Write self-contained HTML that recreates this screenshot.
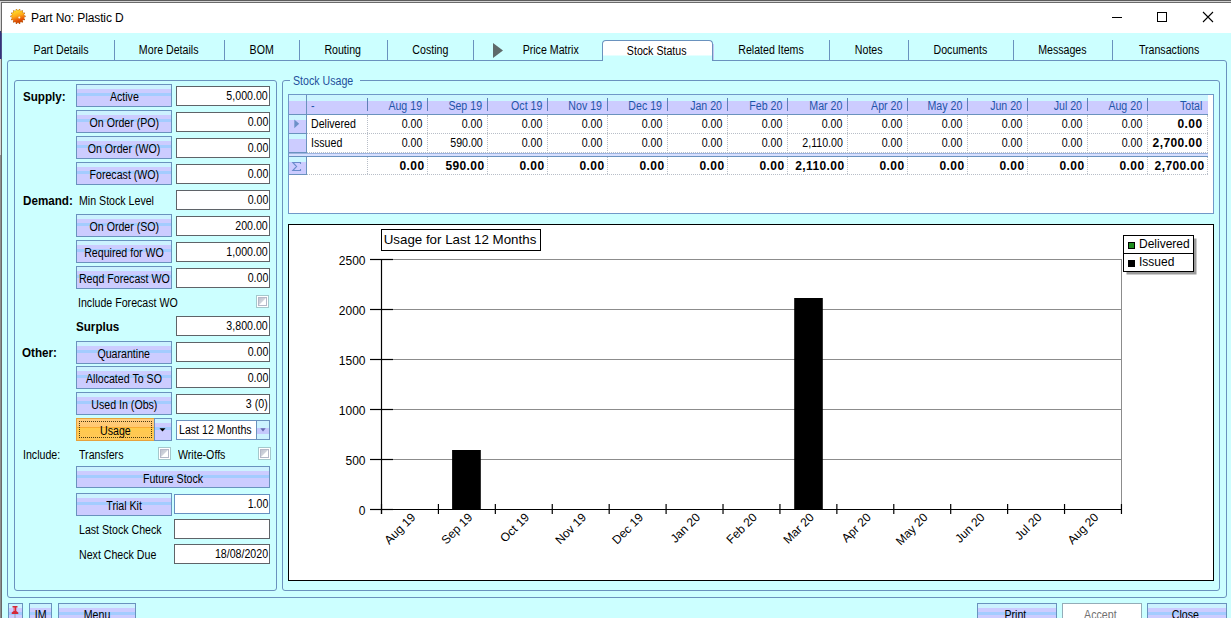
<!DOCTYPE html><html><head><meta charset="utf-8"><style>
*{box-sizing:border-box;margin:0;padding:0}
html,body{width:1231px;height:618px;overflow:hidden;background:#CCFFFF;}
body{position:relative;font-family:"Liberation Sans",sans-serif;font-size:11px;color:#000;}
.a{position:absolute;}
.x{display:inline-block;transform:scaleX(.885);font-size:12px;white-space:nowrap}
.xl{transform-origin:0 50%}
.xc{transform-origin:50% 50%;margin:0 -8px}
.xr{transform-origin:100% 50%}
.t{position:absolute;white-space:nowrap;line-height:14px;height:14px;}
.b{font-weight:bold;}
.btn{position:absolute;border:1px solid #6A92BE;height:23px;text-align:center;line-height:24px;white-space:nowrap;
 background:linear-gradient(to bottom,#CCF2FF 0,#CCF2FF 4px,#CCCCFF 4px,#CCCCFF 8px,#A3CCFF 8px,#A3CCFF 11px,#CCCCFF 11px,#CCCCFF 100%);}
.tb{position:absolute;border:1px solid #5F6368;background:#fff;height:20px;text-align:right;line-height:19px;padding-right:1px;white-space:nowrap;}
.gb{position:absolute;border:1px solid #6A92BE;border-radius:3px;}
.sep{position:absolute;width:1px;background:#6A92BE;top:40px;height:20px;}
.tab{position:absolute;top:42px;height:14px;line-height:14px;text-align:center;white-space:nowrap;}
.cb{position:absolute;width:13px;height:13px;border:1px solid #A4C8CC;background:#fff;}
.cb i{position:absolute;left:1px;top:1px;width:9px;height:9px;border:1px solid #B4B8C8;background:linear-gradient(135deg,#C0C4D0 0,#D0D4DC 49%,#fff 51%,#fff 100%);}
.hd{position:absolute;top:100px;height:13px;line-height:13px;text-align:right;color:#1F55A8;white-space:nowrap;}
.c{position:absolute;text-align:right;white-space:nowrap;height:14px;line-height:14px;}
.cs{position:absolute;text-align:right;white-space:nowrap;height:16px;line-height:16px;font-weight:bold;font-size:12px;letter-spacing:0.4px;}
</style></head><body><div class="a" style="left:0;top:0;width:1231px;height:1px;background:#5C5C5C"></div>
<div class="a" style="left:0;top:1px;width:1231px;height:1px;background:#D2D2D2"></div>
<div class="a" style="left:1px;top:2px;width:1230px;height:1px;background:#6A6A6A"></div>
<div class="a" style="left:2px;top:3px;width:1229px;height:30px;background:#fff"></div>
<div class="a" style="left:0;top:1px;width:1px;height:30px;background:#D4D4D4"></div>
<div class="a" style="left:0;top:31px;width:1px;height:28px;background:#33337A"></div>
<div class="a" style="left:0;top:59px;width:1px;height:96px;background:#D4D4D4"></div>
<div class="a" style="left:1px;top:33px;width:1px;height:26px;background:#50508A;z-index:3"></div>
<div class="a" style="left:0;top:155px;width:1px;height:463px;background:#8E8E8E"></div>
<div class="a" style="left:1px;top:2px;width:1px;height:616px;background:#686868"></div>
<svg class="a" style="left:10px;top:8px" width="17" height="17" viewBox="-8.5 -8.5 17 17">
<defs><linearGradient id="g1" x1="0.3" y1="0" x2="0.6" y2="1"><stop offset="0" stop-color="#FFDC28"/><stop offset="0.45" stop-color="#FFA818"/><stop offset="0.8" stop-color="#E85808"/><stop offset="1" stop-color="#C84000"/></linearGradient></defs>
<g transform="translate(-0.5,-0.1)"><path d="M5.90,-1.11L7.58,-0.55L7.58,0.55L5.90,1.11L5.80,1.55L7.07,2.80L6.59,3.78L4.83,3.56L4.55,3.92L5.15,5.59L4.30,6.27L2.81,5.30L2.40,5.50L2.22,7.27L1.16,7.51L0.23,6.00L-0.23,6.00L-1.16,7.51L-2.22,7.27L-2.40,5.50L-2.81,5.30L-4.30,6.27L-5.15,5.59L-4.55,3.92L-4.83,3.56L-6.59,3.78L-7.07,2.80L-5.80,1.55L-5.90,1.11L-7.58,0.55L-7.58,-0.55L-5.90,-1.11L-5.80,-1.55L-7.07,-2.80L-6.59,-3.78L-4.83,-3.56L-4.55,-3.92L-5.15,-5.59L-4.30,-6.27L-2.81,-5.30L-2.40,-5.50L-2.22,-7.27L-1.16,-7.51L-0.23,-6.00L0.23,-6.00L1.16,-7.51L2.22,-7.27L2.40,-5.50L2.81,-5.30L4.30,-6.27L5.15,-5.59L4.55,-3.92L4.83,-3.56L6.59,-3.78L7.07,-2.80L5.80,-1.55Z" fill="#A85810"/><path d="M5.90,-1.11L7.58,-0.55L7.58,0.55L5.90,1.11L5.80,1.55L7.07,2.80L6.59,3.78L4.83,3.56L4.55,3.92L5.15,5.59L4.30,6.27L2.81,5.30L2.40,5.50L2.22,7.27L1.16,7.51L0.23,6.00L-0.23,6.00L-1.16,7.51L-2.22,7.27L-2.40,5.50L-2.81,5.30L-4.30,6.27L-5.15,5.59L-4.55,3.92L-4.83,3.56L-6.59,3.78L-7.07,2.80L-5.80,1.55L-5.90,1.11L-7.58,0.55L-7.58,-0.55L-5.90,-1.11L-5.80,-1.55L-7.07,-2.80L-6.59,-3.78L-4.83,-3.56L-4.55,-3.92L-5.15,-5.59L-4.30,-6.27L-2.81,-5.30L-2.40,-5.50L-2.22,-7.27L-1.16,-7.51L-0.23,-6.00L0.23,-6.00L1.16,-7.51L2.22,-7.27L2.40,-5.50L2.81,-5.30L4.30,-6.27L5.15,-5.59L4.55,-3.92L4.83,-3.56L6.59,-3.78L7.07,-2.80L5.80,-1.55Z" fill="url(#g1)" transform="scale(0.93)"/><circle r="5.7" fill="url(#g1)"/><circle cx="1.3" cy="1.0" r="1.0" fill="#FFF8E8"/></g></svg>
<div class="t" style="left:31px;top:10px;font-size:12px;line-height:16px;height:16px"><span style="letter-spacing:-0.12px">Part No: Plastic D</span></div>
<div class="a" style="left:1112px;top:17px;width:10px;height:1px;background:#000"></div>
<div class="a" style="left:1157px;top:12px;width:10px;height:10px;border:1px solid #000"></div>
<svg class="a" style="left:1202px;top:11px" width="12" height="12"><path d="M1 1L11 11M11 1L1 11" stroke="#000" stroke-width="1.1" fill="none"/></svg>
<div class="gb" style="left:7px;top:60px;width:1220px;height:538px"></div>
<div class="tab" style="left:8px;width:106px;top:43px"><span class="x xc" style="">Part Details</span></div>
<div class="tab" style="left:114px;width:110px;top:43px"><span class="x xc" style="">More Details</span></div>
<div class="tab" style="left:224px;width:75px;top:43px"><span class="x xc" style="">BOM</span></div>
<div class="tab" style="left:299px;width:88px;top:43px"><span class="x xc" style="">Routing</span></div>
<div class="tab" style="left:387px;width:87px;top:43px"><span class="x xc" style="">Costing</span></div>
<div class="tab" style="left:500px;width:102px;top:43px"><span class="x xc" style="">Price Matrix</span></div>
<div class="tab" style="left:713px;width:117px;top:43px"><span class="x xc" style="">Related Items</span></div>
<div class="tab" style="left:830px;width:78px;top:43px"><span class="x xc" style="">Notes</span></div>
<div class="tab" style="left:908px;width:105px;top:43px"><span class="x xc" style="">Documents</span></div>
<div class="tab" style="left:1013px;width:99px;top:43px"><span class="x xc" style="">Messages</span></div>
<div class="tab" style="left:1112px;width:115px;top:43px"><span class="x xc" style="">Transactions</span></div>
<div class="sep" style="left:114px"></div>
<div class="sep" style="left:224px"></div>
<div class="sep" style="left:299px"></div>
<div class="sep" style="left:387px"></div>
<div class="sep" style="left:473px"></div>
<div class="sep" style="left:829px"></div>
<div class="sep" style="left:908px"></div>
<div class="sep" style="left:1013px"></div>
<div class="sep" style="left:1112px"></div>
<div class="a" style="left:602px;top:40px;width:111px;height:21px;border:1px solid #6A92BE;border-bottom:none;border-radius:4px 4px 0 0;background:linear-gradient(to bottom,#fff 0,#fff 14px,#CCFFFF 15px,#CCFFFF 100%);z-index:0"></div>
<div class="a" style="left:713px;top:44px;width:1px;height:16px;background:#C4C8F0"></div>
<div class="tab" style="left:601px;width:111px;top:44px;z-index:2"><span class="x xc" style="">Stock Status</span></div>
<svg class="a" style="left:492px;top:42px" width="12" height="17"><path d="M1 1L11 8.5L1 16Z" fill="#5E6A6A"/></svg>
<div class="gb" style="left:14px;top:80px;width:263px;height:511px"></div>
<div class="gb" style="left:282px;top:80px;width:938px;height:511px"></div>
<div class="t" style="left:290px;top:74px;background:#CCFFFF;padding:0 0 0 3px;width:70px;overflow:hidden;color:#1F4F9C"><span class="x xl" style="">Stock Usage</span></div>
<div class="btn" style="left:76px;top:84px;width:96px;height:23px;"><span class="x xc" style="">Active</span></div>
<div class="tb" style="left:176px;top:86px;width:94px"><span class="x xr" style="">5,000.00</span></div>
<div class="btn" style="left:76px;top:110px;width:96px;height:23px;"><span class="x xc" style="">On Order (PO)</span></div>
<div class="tb" style="left:176px;top:112px;width:94px"><span class="x xr" style="">0.00</span></div>
<div class="btn" style="left:76px;top:136px;width:96px;height:23px;"><span class="x xc" style="">On Order (WO)</span></div>
<div class="tb" style="left:176px;top:138px;width:94px"><span class="x xr" style="">0.00</span></div>
<div class="btn" style="left:76px;top:162px;width:96px;height:23px;"><span class="x xc" style="">Forecast (WO)</span></div>
<div class="tb" style="left:176px;top:164px;width:94px"><span class="x xr" style="">0.00</span></div>
<div class="t b" style="left:23px;top:90px;"><span class="x xl" style="transform:scaleX(.97)">Supply:</span></div>
<div class="t b" style="left:23px;top:194px;"><span class="x xl" style="transform:scaleX(.97)">Demand:</span></div>
<div class="t" style="left:79px;top:194px;"><span class="x xl" style="">Min Stock Level</span></div>
<div class="tb" style="left:176px;top:190px;width:94px"><span class="x xr" style="">0.00</span></div>
<div class="btn" style="left:76px;top:214px;width:96px;height:23px;"><span class="x xc" style="">On Order (SO)</span></div>
<div class="tb" style="left:176px;top:216px;width:94px"><span class="x xr" style="">200.00</span></div>
<div class="btn" style="left:76px;top:240px;width:96px;height:23px;"><span class="x xc" style="">Required for WO</span></div>
<div class="tb" style="left:176px;top:242px;width:94px"><span class="x xr" style="">1,000.00</span></div>
<div class="btn" style="left:76px;top:266px;width:96px;height:23px;"><span class="x xc" style="">Reqd Forecast WO</span></div>
<div class="tb" style="left:176px;top:268px;width:94px"><span class="x xr" style="">0.00</span></div>
<div class="t" style="left:78px;top:296px;"><span class="x xl" style="">Include Forecast WO</span></div>
<div class="cb" style="left:256px;top:295px"><i></i></div>
<div class="t b" style="left:76px;top:320px;"><span class="x xl" style="transform:scaleX(.97)">Surplus</span></div>
<div class="tb" style="left:176px;top:316px;width:94px"><span class="x xr" style="">3,800.00</span></div>
<div class="t b" style="left:22px;top:346px;"><span class="x xl" style="transform:scaleX(.97)">Other:</span></div>
<div class="btn" style="left:76px;top:341px;width:96px;height:23px;"><span class="x xc" style="">Quarantine</span></div>
<div class="tb" style="left:176px;top:342px;width:94px"><span class="x xr" style="">0.00</span></div>
<div class="btn" style="left:76px;top:366px;width:96px;height:23px;"><span class="x xc" style="">Allocated To SO</span></div>
<div class="tb" style="left:176px;top:368px;width:94px"><span class="x xr" style="">0.00</span></div>
<div class="btn" style="left:76px;top:392px;width:96px;height:23px;"><span class="x xc" style="">Used In (Obs)</span></div>
<div class="tb" style="left:176px;top:394px;width:94px"><span class="x xr" style="">3 (0)</span></div>
<div class="a" style="left:76px;top:418px;width:79px;height:23px;border:1px solid #E6A23C;background:linear-gradient(to bottom,#FFCC80 0,#FFC870 8px,#F8AC30 8px,#F8AC30 9px,#FFCC4C 9px,#FFC850 13px,#FFC858 100%);text-align:center;line-height:24px"><span class="x xc" style="">Usage</span>
<div class="a" style="left:2px;top:2px;width:73px;height:17px;border:1px dotted #4A3A10"></div></div>
<div class="btn" style="left:154px;top:418px;width:18px;height:23px"></div>
<svg class="a" style="left:159px;top:428px" width="7" height="4"><path d="M0.5 0.3L6.5 0.3L3.5 3.4Z" fill="#000"/></svg>
<div class="a" style="left:176px;top:420px;width:94px;height:20px;border:1px solid #6A92BE;background:#fff;line-height:19px;padding-left:2px;white-space:nowrap"><span class="x xl" style="">Last 12 Months</span></div>
<div class="a" style="left:256px;top:421px;width:13px;height:18px;border-left:1px solid #6A92BE;background:linear-gradient(to bottom,#CCF2FF 0,#CCF2FF 7px,#C4C8FC 7px,#C4C8FC 13px,#CCF2FF 13px,#CCF2FF 100%)"></div>
<svg class="a" style="left:260px;top:428px" width="6" height="4"><path d="M0.3 0.3L5.7 0.3L3 3.4Z" fill="#6468B0"/></svg>
<div class="t" style="left:23px;top:448px;"><span class="x xl" style="">Include:</span></div>
<div class="t" style="left:79px;top:448px;"><span class="x xl" style="">Transfers</span></div>
<div class="t" style="left:178px;top:448px;"><span class="x xl" style="">Write-Offs</span></div>
<div class="cb" style="left:158px;top:447px"><i></i></div>
<div class="cb" style="left:258px;top:447px"><i></i></div>
<div class="btn" style="left:76px;top:466px;width:194px;height:22px;"><span class="x xc" style="">Future Stock</span></div>
<div class="btn" style="left:76px;top:493px;width:96px;height:23px;"><span class="x xc" style="">Trial Kit</span></div>
<div class="tb" style="border-color:#6690C0;left:174px;top:494px;width:96px"><span class="x xr" style="border-color:#6690C0;">1.00</span></div>
<div class="t" style="left:79px;top:523px;"><span class="x xl" style="">Last Stock Check</span></div>
<div class="tb" style="left:174px;top:519px;width:96px"></div>
<div class="t" style="left:79px;top:548px;"><span class="x xl" style="">Next Check Due</span></div>
<div class="tb" style="left:174px;top:544px;width:96px"><span class="x xr" style="">18/08/2020</span></div>
<div class="a" style="left:288px;top:94px;width:926px;height:120px;border:1px solid #7098C8;background:#fff"></div>
<div class="a" style="left:289px;top:95px;width:919px;height:19px;background:linear-gradient(to bottom,#CCF6FF 0,#CCF6FF 6px,#CCCCFF 6px,#CCCCFF 100%)"></div>
<div class="a" style="left:289px;top:114px;width:919px;height:1px;background:#6A92BE"></div>
<div class="a" style="left:306px;top:95px;width:1px;height:58px;background:#6A92BE"></div>
<div class="hd" style="left:311px;width:30px;text-align:left"><span class="x xl" style="">-</span></div>
<div class="hd" style="left:367.5px;width:55px"><span class="x xr" style="">Aug 19</span></div>
<div class="hd" style="left:427.5px;width:55px"><span class="x xr" style="">Sep 19</span></div>
<div class="hd" style="left:487.5px;width:55px"><span class="x xr" style="">Oct 19</span></div>
<div class="hd" style="left:547.5px;width:55px"><span class="x xr" style="">Nov 19</span></div>
<div class="hd" style="left:607.5px;width:55px"><span class="x xr" style="">Dec 19</span></div>
<div class="hd" style="left:667.5px;width:55px"><span class="x xr" style="">Jan 20</span></div>
<div class="hd" style="left:727.5px;width:55px"><span class="x xr" style="">Feb 20</span></div>
<div class="hd" style="left:787.5px;width:55px"><span class="x xr" style="">Mar 20</span></div>
<div class="hd" style="left:847.5px;width:55px"><span class="x xr" style="">Apr 20</span></div>
<div class="hd" style="left:907.5px;width:55px"><span class="x xr" style="">May 20</span></div>
<div class="hd" style="left:967.5px;width:55px"><span class="x xr" style="">Jun 20</span></div>
<div class="hd" style="left:1027.5px;width:55px"><span class="x xr" style="">Jul 20</span></div>
<div class="hd" style="left:1087.5px;width:55px"><span class="x xr" style="">Aug 20</span></div>
<div class="hd" style="left:1147.5px;width:55px"><span class="x xr" style="">Total</span></div>
<div class="a" style="left:367px;top:98px;width:1px;height:13px;background:#5F7FB8"></div>
<div class="a" style="left:367px;top:115px;width:0;height:38px;border-left:1px dotted #B8BEC8"></div>
<div class="a" style="left:367px;top:157px;width:0;height:17px;border-left:1px dotted #B8BEC8"></div>
<div class="a" style="left:427px;top:98px;width:1px;height:13px;background:#5F7FB8"></div>
<div class="a" style="left:427px;top:115px;width:0;height:38px;border-left:1px dotted #B8BEC8"></div>
<div class="a" style="left:427px;top:157px;width:0;height:17px;border-left:1px dotted #B8BEC8"></div>
<div class="a" style="left:487px;top:98px;width:1px;height:13px;background:#5F7FB8"></div>
<div class="a" style="left:487px;top:115px;width:0;height:38px;border-left:1px dotted #B8BEC8"></div>
<div class="a" style="left:487px;top:157px;width:0;height:17px;border-left:1px dotted #B8BEC8"></div>
<div class="a" style="left:547px;top:98px;width:1px;height:13px;background:#5F7FB8"></div>
<div class="a" style="left:547px;top:115px;width:0;height:38px;border-left:1px dotted #B8BEC8"></div>
<div class="a" style="left:547px;top:157px;width:0;height:17px;border-left:1px dotted #B8BEC8"></div>
<div class="a" style="left:607px;top:98px;width:1px;height:13px;background:#5F7FB8"></div>
<div class="a" style="left:607px;top:115px;width:0;height:38px;border-left:1px dotted #B8BEC8"></div>
<div class="a" style="left:607px;top:157px;width:0;height:17px;border-left:1px dotted #B8BEC8"></div>
<div class="a" style="left:667px;top:98px;width:1px;height:13px;background:#5F7FB8"></div>
<div class="a" style="left:667px;top:115px;width:0;height:38px;border-left:1px dotted #B8BEC8"></div>
<div class="a" style="left:667px;top:157px;width:0;height:17px;border-left:1px dotted #B8BEC8"></div>
<div class="a" style="left:727px;top:98px;width:1px;height:13px;background:#5F7FB8"></div>
<div class="a" style="left:727px;top:115px;width:0;height:38px;border-left:1px dotted #B8BEC8"></div>
<div class="a" style="left:727px;top:157px;width:0;height:17px;border-left:1px dotted #B8BEC8"></div>
<div class="a" style="left:787px;top:98px;width:1px;height:13px;background:#5F7FB8"></div>
<div class="a" style="left:787px;top:115px;width:0;height:38px;border-left:1px dotted #B8BEC8"></div>
<div class="a" style="left:787px;top:157px;width:0;height:17px;border-left:1px dotted #B8BEC8"></div>
<div class="a" style="left:847px;top:98px;width:1px;height:13px;background:#5F7FB8"></div>
<div class="a" style="left:847px;top:115px;width:0;height:38px;border-left:1px dotted #B8BEC8"></div>
<div class="a" style="left:847px;top:157px;width:0;height:17px;border-left:1px dotted #B8BEC8"></div>
<div class="a" style="left:907px;top:98px;width:1px;height:13px;background:#5F7FB8"></div>
<div class="a" style="left:907px;top:115px;width:0;height:38px;border-left:1px dotted #B8BEC8"></div>
<div class="a" style="left:907px;top:157px;width:0;height:17px;border-left:1px dotted #B8BEC8"></div>
<div class="a" style="left:967px;top:98px;width:1px;height:13px;background:#5F7FB8"></div>
<div class="a" style="left:967px;top:115px;width:0;height:38px;border-left:1px dotted #B8BEC8"></div>
<div class="a" style="left:967px;top:157px;width:0;height:17px;border-left:1px dotted #B8BEC8"></div>
<div class="a" style="left:1027px;top:98px;width:1px;height:13px;background:#5F7FB8"></div>
<div class="a" style="left:1027px;top:115px;width:0;height:38px;border-left:1px dotted #B8BEC8"></div>
<div class="a" style="left:1027px;top:157px;width:0;height:17px;border-left:1px dotted #B8BEC8"></div>
<div class="a" style="left:1087px;top:98px;width:1px;height:13px;background:#5F7FB8"></div>
<div class="a" style="left:1087px;top:115px;width:0;height:38px;border-left:1px dotted #B8BEC8"></div>
<div class="a" style="left:1087px;top:157px;width:0;height:17px;border-left:1px dotted #B8BEC8"></div>
<div class="a" style="left:1147px;top:98px;width:1px;height:13px;background:#5F7FB8"></div>
<div class="a" style="left:1147px;top:115px;width:0;height:38px;border-left:1px dotted #B8BEC8"></div>
<div class="a" style="left:1147px;top:157px;width:0;height:17px;border-left:1px dotted #B8BEC8"></div>
<div class="a" style="left:1207px;top:115px;width:0;height:38px;border-left:1px dotted #B8BEC8"></div>
<div class="a" style="left:1207px;top:157px;width:0;height:17px;border-left:1px dotted #B8BEC8"></div>
<div class="a" style="left:307px;top:133px;width:901px;height:0;border-top:1px dotted #B8BEC8"></div>
<div class="a" style="left:307px;top:152px;width:901px;height:0;border-top:1px dotted #B8BEC8"></div>
<div class="a" style="left:307px;top:174px;width:901px;height:0;border-top:1px dotted #B8BEC8"></div>
<div class="a" style="left:289px;top:115px;width:17px;height:18px;background:linear-gradient(to bottom,#CCF6FF 0,#CCF6FF 5px,#CCCCFF 5px,#CCCCFF 100%)"></div>
<div class="a" style="left:289px;top:133px;width:18px;height:1px;background:#6A92BE"></div>
<div class="a" style="left:289px;top:134px;width:17px;height:18px;background:linear-gradient(to bottom,#CCF6FF 0,#CCF6FF 5px,#CCCCFF 5px,#CCCCFF 100%)"></div>
<div class="a" style="left:289px;top:152px;width:18px;height:1px;background:#6A92BE"></div>
<div class="a" style="left:289px;top:157px;width:17px;height:17px;background:linear-gradient(to bottom,#CCF6FF 0,#CCF6FF 5px,#CCCCFF 5px,#CCCCFF 100%)"></div>
<div class="a" style="left:289px;top:174px;width:18px;height:1px;background:#6A92BE"></div>
<div class="a" style="left:306px;top:157px;width:1px;height:18px;background:#6A92BE"></div>
<svg class="a" style="left:294px;top:119px" width="6" height="10"><path d="M0.3 0.5L5.2 4.8L0.3 9.2Z" fill="#6C90C8"/></svg>
<svg class="a" style="left:291px;top:161px" width="12" height="12"><path d="M9.5 3V1.5H1.8L5.6 5.5L1.8 9.5H9.5V8" fill="none" stroke="#6A8CCC" stroke-width="1.1"/></svg>
<div class="a" style="left:289px;top:153px;width:919px;height:1px;background:#9DB4E0"></div>
<div class="a" style="left:289px;top:154px;width:919px;height:2px;background:#D8E0FF"></div>
<div class="a" style="left:289px;top:156px;width:919px;height:1px;background:#6A92BE"></div>
<div class="c" style="left:311px;top:117px;text-align:left"><span class="x xl" style="">Delivered</span></div>
<div class="c" style="left:311px;top:136px;text-align:left"><span class="x xl" style="">Issued</span></div>
<div class="c" style="left:367.5px;width:55px;top:117px;"><span class="x xr" style="">0.00</span></div>
<div class="c" style="left:367.5px;width:55px;top:136px;"><span class="x xr" style="">0.00</span></div>
<div class="cs" style="left:367.5px;width:57px;top:158px">0.00</div>
<div class="c" style="left:427.5px;width:55px;top:117px;"><span class="x xr" style="">0.00</span></div>
<div class="c" style="left:427.5px;width:55px;top:136px;"><span class="x xr" style="">590.00</span></div>
<div class="cs" style="left:427.5px;width:57px;top:158px">590.00</div>
<div class="c" style="left:487.5px;width:55px;top:117px;"><span class="x xr" style="">0.00</span></div>
<div class="c" style="left:487.5px;width:55px;top:136px;"><span class="x xr" style="">0.00</span></div>
<div class="cs" style="left:487.5px;width:57px;top:158px">0.00</div>
<div class="c" style="left:547.5px;width:55px;top:117px;"><span class="x xr" style="">0.00</span></div>
<div class="c" style="left:547.5px;width:55px;top:136px;"><span class="x xr" style="">0.00</span></div>
<div class="cs" style="left:547.5px;width:57px;top:158px">0.00</div>
<div class="c" style="left:607.5px;width:55px;top:117px;"><span class="x xr" style="">0.00</span></div>
<div class="c" style="left:607.5px;width:55px;top:136px;"><span class="x xr" style="">0.00</span></div>
<div class="cs" style="left:607.5px;width:57px;top:158px">0.00</div>
<div class="c" style="left:667.5px;width:55px;top:117px;"><span class="x xr" style="">0.00</span></div>
<div class="c" style="left:667.5px;width:55px;top:136px;"><span class="x xr" style="">0.00</span></div>
<div class="cs" style="left:667.5px;width:57px;top:158px">0.00</div>
<div class="c" style="left:727.5px;width:55px;top:117px;"><span class="x xr" style="">0.00</span></div>
<div class="c" style="left:727.5px;width:55px;top:136px;"><span class="x xr" style="">0.00</span></div>
<div class="cs" style="left:727.5px;width:57px;top:158px">0.00</div>
<div class="c" style="left:787.5px;width:55px;top:117px;"><span class="x xr" style="">0.00</span></div>
<div class="c" style="left:787.5px;width:55px;top:136px;"><span class="x xr" style="">2,110.00</span></div>
<div class="cs" style="left:787.5px;width:57px;top:158px">2,110.00</div>
<div class="c" style="left:847.5px;width:55px;top:117px;"><span class="x xr" style="">0.00</span></div>
<div class="c" style="left:847.5px;width:55px;top:136px;"><span class="x xr" style="">0.00</span></div>
<div class="cs" style="left:847.5px;width:57px;top:158px">0.00</div>
<div class="c" style="left:907.5px;width:55px;top:117px;"><span class="x xr" style="">0.00</span></div>
<div class="c" style="left:907.5px;width:55px;top:136px;"><span class="x xr" style="">0.00</span></div>
<div class="cs" style="left:907.5px;width:57px;top:158px">0.00</div>
<div class="c" style="left:967.5px;width:55px;top:117px;"><span class="x xr" style="">0.00</span></div>
<div class="c" style="left:967.5px;width:55px;top:136px;"><span class="x xr" style="">0.00</span></div>
<div class="cs" style="left:967.5px;width:57px;top:158px">0.00</div>
<div class="c" style="left:1027.5px;width:55px;top:117px;"><span class="x xr" style="">0.00</span></div>
<div class="c" style="left:1027.5px;width:55px;top:136px;"><span class="x xr" style="">0.00</span></div>
<div class="cs" style="left:1027.5px;width:57px;top:158px">0.00</div>
<div class="c" style="left:1087.5px;width:55px;top:117px;"><span class="x xr" style="">0.00</span></div>
<div class="c" style="left:1087.5px;width:55px;top:136px;"><span class="x xr" style="">0.00</span></div>
<div class="cs" style="left:1087.5px;width:57px;top:158px">0.00</div>
<div class="c" style="left:1147.5px;width:55px;top:117px;font-weight:bold;font-size:12px;letter-spacing:0.4px;">0.00</div>
<div class="c" style="left:1147.5px;width:55px;top:136px;font-weight:bold;font-size:12px;letter-spacing:0.4px;">2,700.00</div>
<div class="cs" style="left:1147.5px;width:57px;top:158px">2,700.00</div>
<svg class="a" style="left:288px;top:224px" width="927" height="357" viewBox="288 224 927 357" font-family="Liberation Sans, sans-serif"><rect x="288.5" y="224.5" width="925" height="356" fill="#fff" stroke="#000" stroke-width="1"/><rect x="381.5" y="259.5" width="740" height="250" fill="none" stroke="#8C8C8C" stroke-width="1"/><line x1="381.5" y1="459.5" x2="1121.5" y2="459.5" stroke="#8C8C8C" stroke-width="1"/><line x1="381.5" y1="409.5" x2="1121.5" y2="409.5" stroke="#8C8C8C" stroke-width="1"/><line x1="381.5" y1="359.5" x2="1121.5" y2="359.5" stroke="#8C8C8C" stroke-width="1"/><line x1="381.5" y1="309.5" x2="1121.5" y2="309.5" stroke="#8C8C8C" stroke-width="1"/><rect x="452.1" y="450" width="28.7" height="59.5" fill="#000"/><rect x="794.2" y="298" width="28.6" height="211.5" fill="#000"/><line x1="381.5" y1="259" x2="381.5" y2="514" stroke="#000" stroke-width="1.2"/><line x1="370" y1="509.5" x2="1122" y2="509.5" stroke="#000" stroke-width="1.2"/><line x1="370" y1="509.5" x2="393" y2="509.5" stroke="#000" stroke-width="1.2"/><text x="365.5" y="514.9" font-size="12" text-anchor="end">0</text><line x1="370" y1="459.5" x2="393" y2="459.5" stroke="#000" stroke-width="1.2"/><text x="365.5" y="464.9" font-size="12" text-anchor="end">500</text><line x1="370" y1="409.5" x2="393" y2="409.5" stroke="#000" stroke-width="1.2"/><text x="365.5" y="414.9" font-size="12" text-anchor="end">1000</text><line x1="370" y1="359.5" x2="393" y2="359.5" stroke="#000" stroke-width="1.2"/><text x="365.5" y="364.9" font-size="12" text-anchor="end">1500</text><line x1="370" y1="309.5" x2="393" y2="309.5" stroke="#000" stroke-width="1.2"/><text x="365.5" y="314.9" font-size="12" text-anchor="end">2000</text><line x1="370" y1="259.5" x2="393" y2="259.5" stroke="#000" stroke-width="1.2"/><text x="365.5" y="264.9" font-size="12" text-anchor="end">2500</text><line x1="381.5" y1="504" x2="381.5" y2="514" stroke="#000" stroke-width="1.2"/><line x1="438.42" y1="504" x2="438.42" y2="514" stroke="#000" stroke-width="1.2"/><line x1="495.34000000000003" y1="504" x2="495.34000000000003" y2="514" stroke="#000" stroke-width="1.2"/><line x1="552.26" y1="504" x2="552.26" y2="514" stroke="#000" stroke-width="1.2"/><line x1="609.1800000000001" y1="504" x2="609.1800000000001" y2="514" stroke="#000" stroke-width="1.2"/><line x1="666.1" y1="504" x2="666.1" y2="514" stroke="#000" stroke-width="1.2"/><line x1="723.02" y1="504" x2="723.02" y2="514" stroke="#000" stroke-width="1.2"/><line x1="779.94" y1="504" x2="779.94" y2="514" stroke="#000" stroke-width="1.2"/><line x1="836.86" y1="504" x2="836.86" y2="514" stroke="#000" stroke-width="1.2"/><line x1="893.78" y1="504" x2="893.78" y2="514" stroke="#000" stroke-width="1.2"/><line x1="950.7" y1="504" x2="950.7" y2="514" stroke="#000" stroke-width="1.2"/><line x1="1007.62" y1="504" x2="1007.62" y2="514" stroke="#000" stroke-width="1.2"/><line x1="1064.54" y1="504" x2="1064.54" y2="514" stroke="#000" stroke-width="1.2"/><line x1="1121.46" y1="504" x2="1121.46" y2="514" stroke="#000" stroke-width="1.2"/><text transform="translate(416.26,518.1) rotate(-45)" font-size="12" text-anchor="end">Aug 19</text><text transform="translate(473.18,518.1) rotate(-45)" font-size="12" text-anchor="end">Sep 19</text><text transform="translate(530.1,518.1) rotate(-45)" font-size="12" text-anchor="end">Oct 19</text><text transform="translate(587.02,518.1) rotate(-45)" font-size="12" text-anchor="end">Nov 19</text><text transform="translate(643.94,518.1) rotate(-45)" font-size="12" text-anchor="end">Dec 19</text><text transform="translate(700.86,518.1) rotate(-45)" font-size="12" text-anchor="end">Jan 20</text><text transform="translate(757.78,518.1) rotate(-45)" font-size="12" text-anchor="end">Feb 20</text><text transform="translate(814.7,518.1) rotate(-45)" font-size="12" text-anchor="end">Mar 20</text><text transform="translate(871.62,518.1) rotate(-45)" font-size="12" text-anchor="end">Apr 20</text><text transform="translate(928.54,518.1) rotate(-45)" font-size="12" text-anchor="end">May 20</text><text transform="translate(985.46,518.1) rotate(-45)" font-size="12" text-anchor="end">Jun 20</text><text transform="translate(1042.3799999999999,518.1) rotate(-45)" font-size="12" text-anchor="end">Jul 20</text><text transform="translate(1099.3,518.1) rotate(-45)" font-size="12" text-anchor="end">Aug 20</text><rect x="381.5" y="229.5" width="159" height="21" fill="#fff" stroke="#000" stroke-width="1"/><text x="383.7" y="243.6" font-size="13.33">Usage for Last 12 Months</text><rect x="1126.5" y="238.5" width="70" height="36" fill="#8A8A8A" opacity="0.85"/><rect x="1123.5" y="235.5" width="70" height="36" fill="#fff" stroke="#000" stroke-width="1"/><line x1="1123.5" y1="253.5" x2="1193.5" y2="253.5" stroke="#000" stroke-width="1"/><rect x="1128.5" y="242.5" width="6" height="6" fill="#1E8C1E" stroke="#000" stroke-width="1"/><rect x="1128.5" y="260.5" width="6" height="6" fill="#000" stroke="#000" stroke-width="1"/><text x="1139" y="248" font-size="12">Delivered</text><text x="1139" y="266" font-size="12">Issued</text></svg>
<div class="btn" style="left:8px;top:603px;width:15px;height:23px;"></div>
<div class="btn" style="left:29px;top:603px;width:23px;height:23px;line-height:23px;"><span class="x xc" style="">IM</span></div>
<div class="btn" style="left:58px;top:603px;width:78px;height:23px;line-height:23px;"><span class="x xc" style="">Menu</span></div>
<div class="btn" style="left:977px;top:603px;width:80px;height:23px;line-height:23px;padding-right:3px;"><span class="x xc" style="">Print</span></div>
<div class="a" style="left:1062px;top:603px;width:80px;height:23px;border:1px solid #94ACB8;background:#fff;text-align:center;line-height:23px;padding-right:3px;color:#707070"><span class="x xc" style="">Accept</span></div>
<div class="btn" style="left:1147px;top:603px;width:80px;height:23px;line-height:23px;padding-right:3px;"><span class="x xc" style="">Close</span></div>
<svg class="a" style="left:10px;top:604px" width="10" height="14"><path d="M2.5 2h5v1.6h-1.2v3.4l2 1.5v1.5h-6.6v-1.5l2-1.5v-3.4h-1.2z" fill="#D42838"/><path d="M4.3 3.5v3.5" stroke="#F8A0A8" stroke-width="0.8"/><path d="M5 10v4" stroke="#98A0B0" stroke-width="1"/></svg></body></html>
